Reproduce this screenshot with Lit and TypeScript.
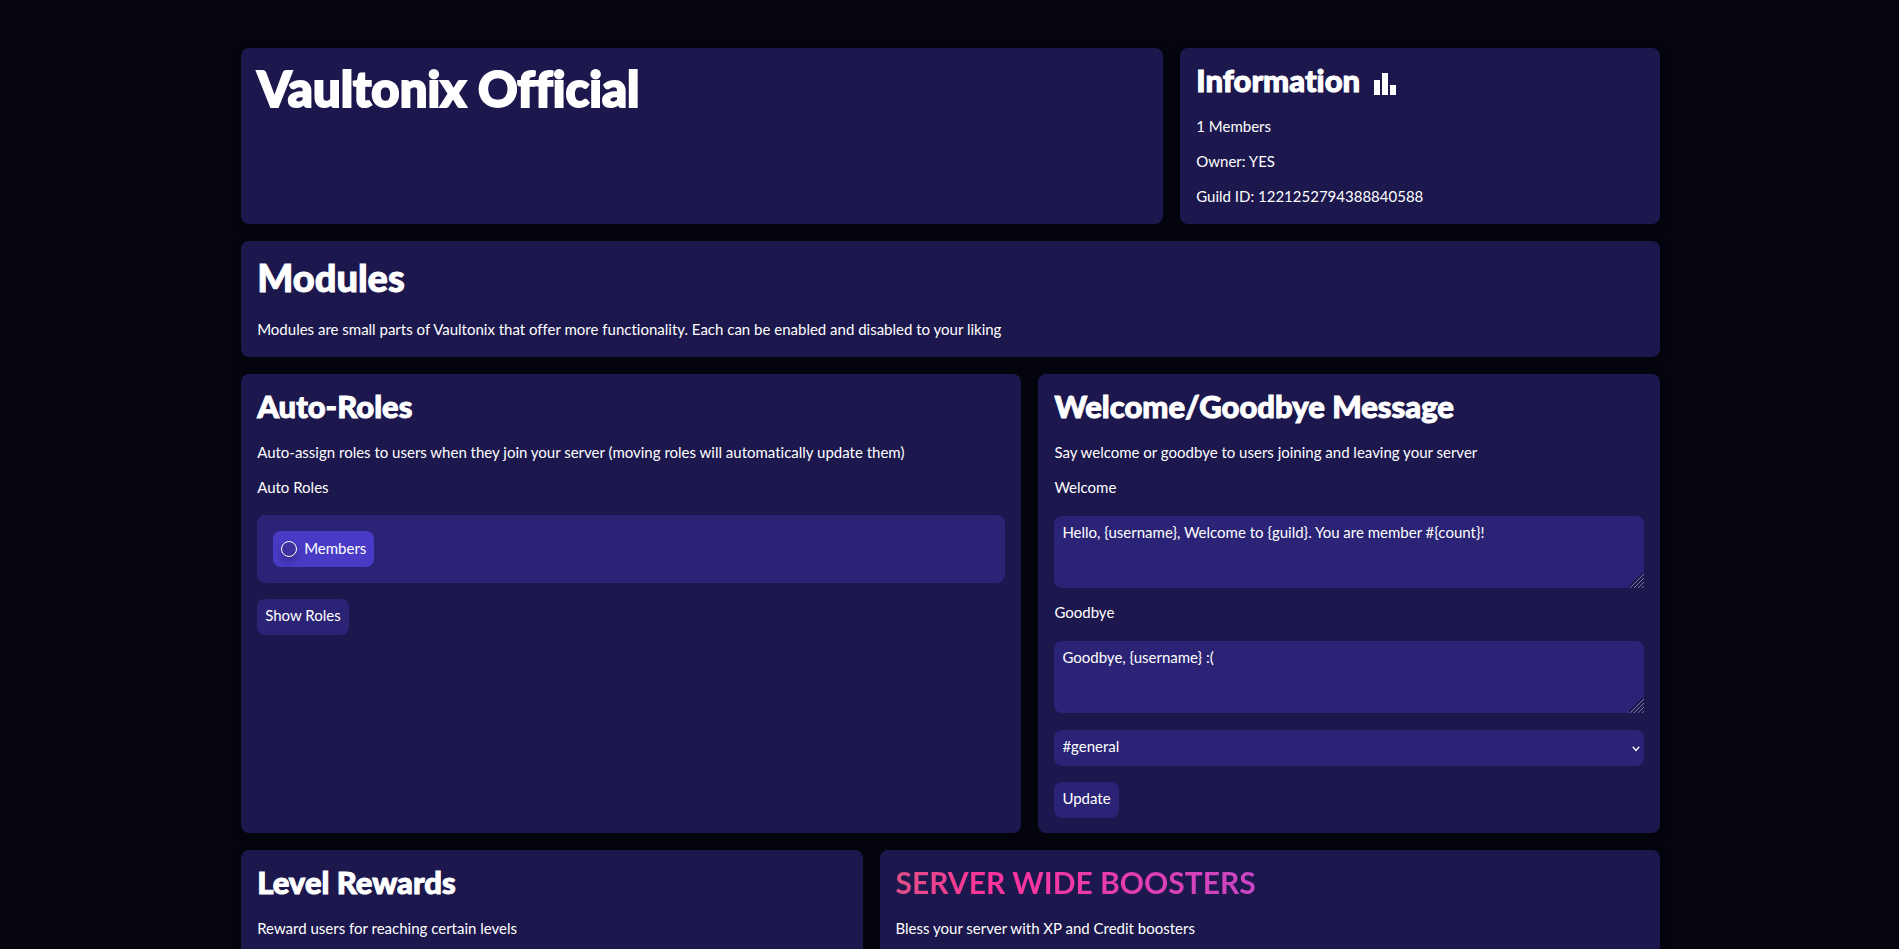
import { LitElement, html, css } from "lit";
import { customElement } from "lit/decorators.js";

@customElement("app-root")
export class AppRoot extends LitElement {
  static styles = css`
    :host {
      display: block;
      min-height: 100vh;
      box-sizing: border-box;
      padding: 48px 12.6% 17px 12.7%;
      background: #05050f;
      color: #fff;
      font: 400 15px/20px "Lato", sans-serif;
      font-variant-ligatures: none;
    }
    * {
      box-sizing: border-box;
    }
    .page {
      display: grid;
      gap: 17px;
    }
    .row {
      display: grid;
      gap: 17px;
    }
    .row-top {
      grid-template-columns: 65% minmax(0, 1fr);
    }
    .row-roles {
      grid-template-columns: 55% minmax(0, 1fr);
    }
    .row-levels {
      grid-template-columns: minmax(0, 1fr) 55%;
    }
    .card {
      padding: 11px 16px 18px;
      border-radius: 8px;
      background: #1c174d;
      box-shadow: 0 4px 8px rgba(0, 0, 0, 0.3);
    }
    .card-form {
      padding-bottom: 15px;
    }
    h1,
    h2,
    p {
      margin: 0;
    }
    h1,
    h2 {
      font-weight: 900;
      -webkit-text-stroke: 1px currentColor;
    }
    .title {
      font-size: 49px;
      line-height: 58px;
      -webkit-text-stroke-width: 2px;
    }
    .section {
      margin-bottom: 16px;
      font-size: 38px;
      line-height: 51px;
    }
    .heading {
      margin-bottom: 14px;
      font-size: 31px;
      line-height: 43px;
    }
    .boost {
      width: fit-content;
      font-size: 30px;
      font-weight: 700;
      -webkit-text-stroke: 0;
      background: linear-gradient(90deg, #dc5085 0%, #ff3399 26%, #c846c4 100%);
      -webkit-background-clip: text;
      background-clip: text;
      color: transparent;
    }
    .bars {
      width: 22px;
      height: 22px;
      margin-left: 6px;
      vertical-align: -3px;
      fill: #fff;
    }
    .text + .text {
      margin-top: 15px;
    }
    .label {
      display: block;
      width: fit-content;
      margin: 15px 0 18px;
    }
    .roles {
      display: flex;
      flex-wrap: wrap;
      gap: 16px;
      margin-bottom: 16px;
      padding: 16px;
      border-radius: 8px;
      background: #2b2375;
    }
    button,
    textarea,
    select {
      margin: 0;
      border: 0;
      border-radius: 8px;
      background: #2b2375;
      color: inherit;
      font: inherit;
      font-variant-ligatures: none;
    }
    .button {
      display: block;
      height: 36px;
      padding: 6px 8px 10px;
    }
    .chip {
      display: flex;
      align-items: center;
      gap: 7px;
      height: 36px;
      padding: 0 8px;
      background: #4a3bc6;
    }
    .chip-name {
      padding-bottom: 3px;
    }
    .dot {
      width: 16px;
      height: 16px;
      border: 1px solid #fff;
      border-radius: 50%;
      background: #3d32a0;
      box-shadow: 0 4px 8px rgba(0, 0, 0, 0.3);
    }
    .message {
      display: block;
      width: 100%;
      height: 72px;
      margin-top: 19px;
      padding: 6px 8px;
      resize: both;
    }
    .message::-webkit-resizer {
      background: url("data:image/svg+xml,%3Csvg xmlns='http://www.w3.org/2000/svg' width='15' height='15' fill='none'%3E%3Cpath d='M-1 15L15 -1M3 15L15 3M7 15L15 7M11 15L15 11' stroke='%2319153f' stroke-width='1.5'/%3E%3Cpath d='M0 16L16 0M4 16L16 4M8 16L16 8M12 16L16 12' stroke='%238f8cae' stroke-width='.8'/%3E%3C/svg%3E")
        no-repeat right bottom;
    }
    .label-tight {
      margin: 14px 0 0;
    }
    .label-first {
      margin-bottom: 0;
    }
    .channel {
      display: block;
      width: 100%;
      height: 36px;
      margin: 17px 0 16px;
      padding: 0 16px 4px 8px;
      appearance: none;
      background: #2b2375
        url("data:image/svg+xml,%3Csvg xmlns='http://www.w3.org/2000/svg' width='8' height='6' fill='none' stroke='white' stroke-width='1.3'%3E%3Cpath d='M.8 .8L4 4.4L7.2 .8'/%3E%3C/svg%3E")
        no-repeat right 4px top 16px;
    }
    @media (max-width: 1000px) {
      :host {
        padding-inline: 16px;
      }
      .row {
        grid-template-columns: minmax(0, 1fr);
      }
    }
  `;

  render() {
    return html`
      <main class="page">
        <div class="row row-top">
          <section class="card"><h1 class="title">Vaultonix Official</h1></section>
          <section class="card">
            <h2 class="heading">
              Information
              <svg class="bars" viewBox="0 0 22 22" aria-hidden="true">
                <rect x="0" y="7" width="6" height="15" />
                <rect x="8" y="0" width="6" height="22" />
                <rect x="16" y="12" width="6" height="10" />
              </svg>
            </h2>
            <p class="text">1 Members</p>
            <p class="text">Owner: YES</p>
            <p class="text">Guild ID: 1221252794388840588</p>
          </section>
        </div>

        <section class="card">
          <h1 class="section">Modules</h1>
          <p class="text">
            Modules are small parts of Vaultonix that offer more functionality. Each can be enabled and disabled to your
            liking
          </p>
        </section>

        <div class="row row-roles">
          <section class="card">
            <h2 class="heading">Auto-Roles</h2>
            <p class="text">
              Auto-assign roles to users when they join your server (moving roles will automatically update them)
            </p>
            <p class="label" id="auto-roles">Auto Roles</p>
            <div class="roles" role="group" aria-labelledby="auto-roles">
              <button class="chip" type="button"><span class="dot"></span><span class="chip-name">Members</span></button>
            </div>
            <button class="button" type="button">Show Roles</button>
          </section>

          <section class="card card-form">
            <h2 class="heading">Welcome/Goodbye Message</h2>
            <p class="text">Say welcome or goodbye to users joining and leaving your server</p>
            <label class="label label-first" for="welcome">Welcome</label>
            <textarea
              class="message"
              id="welcome"
              .value=${"Hello, {username}, Welcome to {guild}. You are member #{count}!"}
            ></textarea>
            <label class="label label-tight" for="goodbye">Goodbye</label>
            <textarea class="message" id="goodbye" .value=${"Goodbye, {username} :("}></textarea>
            <select class="channel" aria-label="Channel">
              <option>#general</option>
            </select>
            <button class="button" type="button">Update</button>
          </section>
        </div>

        <div class="row row-levels">
          <section class="card">
            <h2 class="heading">Level Rewards</h2>
            <p class="text">Reward users for reaching certain levels</p>
          </section>
          <section class="card">
            <h2 class="heading boost">SERVER WIDE BOOSTERS</h2>
            <p class="text">Bless your server with XP and Credit boosters</p>
          </section>
        </div>
      </main>
    `;
  }
}
